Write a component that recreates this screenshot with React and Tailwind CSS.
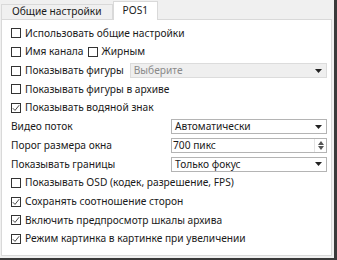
import { useState } from "react";

const font = { fontFamily: '"Noto Sans", "Open Sans", sans-serif' };

function Check({ checked }) {
  return (
    <span className="inline-flex h-[10px] w-[10px] shrink-0 items-center justify-center border border-[#333] bg-white">
      {checked && (
        <svg width="8" height="8" viewBox="0 0 8 8">
          <path d="M0.8 4.2 L3 6.4 L7.2 1.2" fill="none" stroke="#333" strokeWidth="0.9" />
        </svg>
      )}
    </span>
  );
}

function CheckRow({ label, checked }) {
  return (
    <div className="flex h-[18.7px] items-center gap-[4px] whitespace-nowrap">
      <Check checked={checked} />
      <span>{label}</span>
    </div>
  );
}

function Arrow() {
  return (
    <svg width="7" height="4" viewBox="0 0 7 4" className="shrink-0">
      <path d="M0 0 H7 L3.5 4 Z" fill="#222" />
    </svg>
  );
}

function Select({ value, disabled }) {
  return (
    <div
      className={`flex h-[15px] flex-1 items-center justify-between border pl-[3px] pr-[4px] ${
        disabled ? "border-[#dcdcdc] bg-[#efefef] text-[#8a8a8a]" : "border-[#b4b4b4] bg-white text-[#1a1a1a]"
      }`}
    >
      <span>{value}</span>
      <Arrow />
    </div>
  );
}

function Spin({ value }) {
  return (
    <div className="flex h-[15px] flex-1 items-center justify-between border border-[#b4b4b4] bg-white pl-[1px]">
      <span>{value}</span>
      <div className="flex h-full w-[12px] flex-col items-center justify-center gap-[1px] border-l border-[#e4e4e4]">
        <svg width="6" height="4" viewBox="0 0 6 4">
          <path d="M0 4 L3 0 L6 4 Z" fill="#555" />
        </svg>
        <svg width="6" height="4" viewBox="0 0 6 4">
          <path d="M0 0 L3 4 L6 0 Z" fill="#555" />
        </svg>
      </div>
    </div>
  );
}

function FieldRow({ label, children }) {
  return (
    <div className="flex h-[18.7px] items-center whitespace-nowrap">
      <span className="w-[160px] shrink-0">{label}</span>
      <div className="mr-[4px] flex flex-1">{children}</div>
    </div>
  );
}

export default function App() {
  const [tab] = useState("pos1");
  return (
    <div className="h-[260px] w-[337px] overflow-hidden bg-[#3a3a3a]" style={font}>
      <div className="h-[258px] w-[334px] bg-[#f0f0f0] pl-[1px] text-[10.2px] text-[#1a1a1a]">
        {/* Tabs */}
        <div className="flex h-[19px] items-end whitespace-nowrap">
          <div className="flex h-[15px] items-center border border-b-0 border-[#d9d9d9] bg-[#f0f0f0] px-[10px]">
            Общие настройки
          </div>
          <div className="relative -mb-px flex h-[19px] items-center border border-b-0 border-[#d9d9d9] bg-white px-[9px]">
            {tab === "pos1" && "POS1"}
          </div>
        </div>

        {/* Panel */}
        <div className="h-[237px] w-[331px] border border-[#d9d9d9] bg-white pl-[9px] pt-[4px]">
          <CheckRow label="Использовать общие настройки" />
          <div className="flex h-[18.7px] items-center whitespace-nowrap">
            <div className="flex items-center gap-[4px]">
              <Check />
              <span>Имя канала</span>
            </div>
            <div className="ml-[4px] flex items-center gap-[4px]">
              <Check />
              <span>Жирным</span>
            </div>
          </div>
          <div className="flex h-[18.7px] items-center whitespace-nowrap">
            <div className="flex shrink-0 items-center gap-[4px]">
              <Check />
              <span>Показывать фигуры</span>
            </div>
            <div className="ml-[6px] mr-[4px] flex flex-1">
              <Select value="Выберите" disabled />
            </div>
          </div>
          <CheckRow label="Показывать фигуры в архиве" />
          <CheckRow label="Показывать водяной знак" checked />
          <FieldRow label="Видео поток">
            <Select value="Автоматически" />
          </FieldRow>
          <FieldRow label="Порог размера окна">
            <Spin value="700 пикс" />
          </FieldRow>
          <FieldRow label="Показывать границы">
            <Select value="Только фокус" />
          </FieldRow>
          <CheckRow label="Показывать OSD (кодек, разрешение, FPS)" />
          <CheckRow label="Сохранять соотношение сторон" checked />
          <CheckRow label="Включить предпросмотр шкалы архива" checked />
          <CheckRow label="Режим картинка в картинке при увеличении" checked />
        </div>
      </div>
    </div>
  );
}
